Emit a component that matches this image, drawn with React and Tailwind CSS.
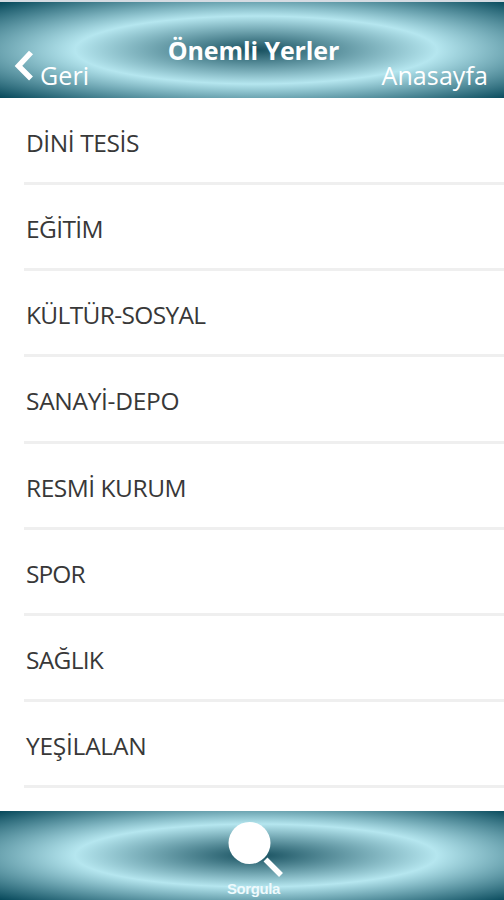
const places = [
  { name: 'DİNİ TESİS', tracking: 'tracking-[-0.42px]' },
  { name: 'EĞİTİM', tracking: 'tracking-[-0.6px]' },
  { name: 'KÜLTÜR-SOSYAL', tracking: 'tracking-[-0.65px]' },
  { name: 'SANAYİ-DEPO', tracking: 'tracking-[-0.3px]' },
  { name: 'RESMİ KURUM', tracking: 'tracking-[-0.47px]' },
  { name: 'SPOR', tracking: 'tracking-[-0.9px]' },
  { name: 'SAĞLIK', tracking: 'tracking-[-0.7px]' },
  { name: 'YEŞİLALAN', tracking: 'tracking-[-0.25px]' },
];

const barBackground =
  'bg-[radial-gradient(ellipse_farthest-corner_at_256px_50%,#17505f_0%,#b5e6ef_50%,#06485a_100%)]';

function BackIcon() {
  return (
    <svg width="20" height="32" viewBox="0 0 20 32" fill="none" stroke="#fff" strokeWidth="5.5">
      <path d="M17 2.5 4.5 16 17 28.5" />
    </svg>
  );
}

function SearchIcon() {
  return (
    <svg width="56" height="56" viewBox="0 0 56 56">
      <path d="M38.5 37.5 54 53" stroke="#fff" strokeWidth="5.5" />
      <circle cx="22.5" cy="21" r="21" fill="#fff" />
    </svg>
  );
}

function Header() {
  return (
    <header className={`grid h-[98px] grid-cols-[1fr_auto_1fr] border-t-2 border-[#d5dbe2] text-white ${barBackground}`}>
      <button className="flex items-start pl-[14px] pt-[48px]">
        <BackIcon />
        <span className="pl-[6px] pt-[8px] text-[25px] leading-[34px] tracking-[0.1px]">Geri</span>
      </button>
      <h1 className="pl-[3px] pt-[31px] text-[25px] font-bold leading-[34px] tracking-[-0.1px]">Önemli Yerler</h1>
      <button className="flex items-start justify-end pr-[16px] pt-[56px] text-[25px] leading-[34px] tracking-[0.1px]">
        Anasayfa
      </button>
    </header>
  );
}

function App() {
  return (
    <div className="flex h-[900px] w-[504px] flex-col overflow-hidden bg-white font-['Open_Sans',sans-serif]">
      <Header />

      <ul className="flex-1 pl-[24px] pt-[1px]">
        {places.map((place) => (
          <li key={place.name} className="flex h-[86.15px] items-center border-b-[3px] border-[#efefef] pl-[2px] pt-[5px]">
            <span className={`whitespace-nowrap text-[24.5px] leading-[34px] text-[#383838] ${place.tracking}`}>
              {place.name}
            </span>
          </li>
        ))}
      </ul>

      <footer className={`flex h-[89px] flex-col items-center pt-[11px] text-white ${barBackground}`}>
        <button className="flex flex-col items-center pl-[6px]">
          <SearchIcon />
          <span className="mr-[3px] mt-[2px] font-['Liberation_Sans',sans-serif] text-[15px] font-bold leading-[18px] tracking-[-0.4px] text-[#eefafd]">
            Sorgula
          </span>
        </button>
      </footer>
    </div>
  );
}

export default App;
